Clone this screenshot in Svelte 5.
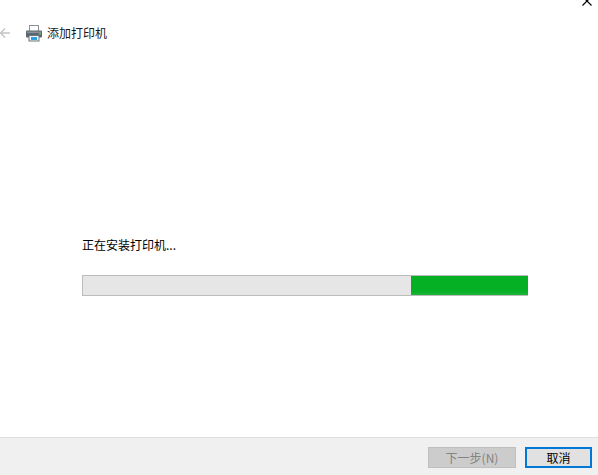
<script>
  let progress = 26.4;
</script>

<div class="wizard">
  <svg class="close" viewBox="0 0 10 10" width="10" height="10" aria-hidden="true">
    <path d="M0.5 -3.5 L9.5 5.5 M9.5 -3.5 L0.5 5.5" stroke="#000" stroke-width="1.2" fill="none" />
  </svg>

  <header class="head">
    <svg class="back" viewBox="0 0 12 12" width="12" height="12" aria-hidden="true">
      <path d="M11 6 H1.5 M6 1.5 L1.5 6 L6 10.5" stroke="#c4c4c4" stroke-width="1.5" fill="none" />
    </svg>
    <svg class="printer" viewBox="0 0 16 17" width="16" height="17" aria-hidden="true">
      <rect x="3.5" y="0.5" width="9" height="6" fill="#fff" stroke="#8a9095" />
      <rect x="0" y="5.5" width="16" height="7" rx="1" fill="#5d666d" />
      <rect x="1" y="6.5" width="14" height="1.5" fill="#87919a" />
      <rect x="13" y="8.5" width="2" height="1" fill="#7fd36b" />
      <rect x="3" y="10.5" width="10" height="5.5" fill="#f4f8fa" stroke="#6b7479" />
      <rect x="5" y="12" width="6" height="3" fill="#2f9fe0" />
    </svg>
    <span class="title">添加打印机</span>
  </header>

  <main class="body">
    <p class="status">正在安装打印机...</p>
    <div class="track">
      <div class="fill" style="width: {progress}%"></div>
    </div>
  </main>

  <footer class="foot">
    <button class="btn next" disabled>下一步(N)</button>
    <button class="btn cancel">取消</button>
  </footer>
</div>

<style>
  :global(body) {
    margin: 0;
    background: #fff;
  }

  .wizard {
    position: relative;
    width: 598px;
    height: 475px;
    display: flex;
    flex-direction: column;
    overflow: hidden;
    font-family: "Noto Sans CJK SC", "Liberation Sans", sans-serif;
    font-size: 12px;
    color: #000;
    background: #fff;
  }

  .close {
    position: absolute;
    top: 0;
    right: 6px;
  }

  .head {
    display: flex;
    align-items: center;
    height: 24px;
    margin-top: 21px;
  }

  .back {
    margin-left: -1px;
  }

  .printer {
    margin-left: 15px;
  }

  .title {
    margin-left: 5px;
    line-height: 24px;
    color: #1a1a1a;
  }

  .body {
    flex: 1;
    padding: 0 70px 0 82px;
  }

  .status {
    margin: 189px 0 0;
    height: 22px;
    line-height: 22px;
  }

  .track {
    box-sizing: border-box;
    display: flex;
    justify-content: flex-end;
    height: 21px;
    margin-top: 19px;
    background: #e6e6e6;
    border: 1px solid #bcbcbc;
  }

  .fill {
    margin-right: -1px;
    background: linear-gradient(to bottom, #06b025 80%, #20b53b);
  }

  .foot {
    box-sizing: border-box;
    display: flex;
    justify-content: flex-end;
    gap: 9px;
    height: 38px;
    padding: 9px 6px 0 0;
    background: #f0f0f0;
    border-top: 1px solid #dfdfdf;
  }

  .btn {
    box-sizing: border-box;
    height: 21px;
    padding: 0;
    font: inherit;
    line-height: 17px;
  }

  .next {
    width: 88px;
    color: #838383;
    background: #cccccc;
    border: 1px solid #bfbfbf;
  }

  .cancel {
    width: 67px;
    color: #000;
    background: #e1e1e1;
    border: 2px solid #0078d7;
  }
</style>
